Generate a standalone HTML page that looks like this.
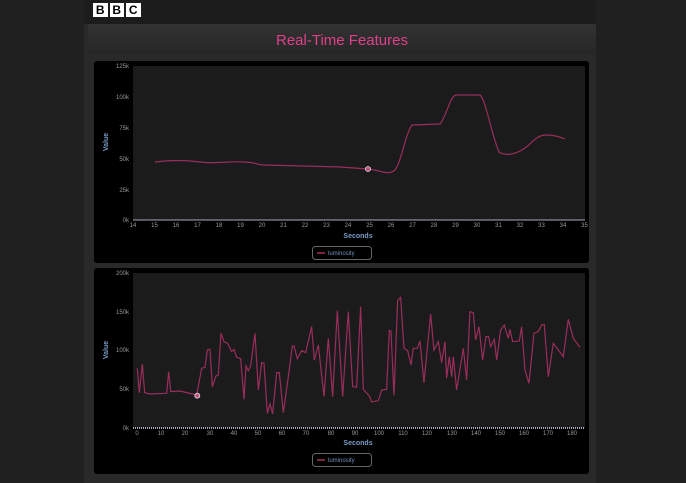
<!DOCTYPE html>
<html><head><meta charset="utf-8"><style>
*{margin:0;padding:0;box-sizing:border-box}
body{width:686px;height:483px;background:#202020;font-family:"Liberation Sans",sans-serif;overflow:hidden;position:relative}
.col{position:absolute;left:84px;top:0;width:512px;height:483px;background:#292929}
.hdr{position:absolute;left:84px;top:0;width:512px;height:24px;background:#1c1c1c}
.bbc{position:absolute;top:3px;display:flex;gap:2px;left:93px}
.bbc span{width:14.5px;height:14px;background:#fff;color:#000;font:bold 12px "Liberation Sans",sans-serif;display:flex;align-items:center;justify-content:center}
.title{position:absolute;left:88px;top:24px;width:508px;height:30px;background:linear-gradient(#333,#262626);color:#e0408a;font-size:15px;text-align:center;line-height:33px}
.panel{position:absolute;left:94px;width:495px;background:#000;border-radius:3px}
svg{position:absolute;left:0;top:0}
</style></head><body>
<div class="col"></div><div class="hdr"></div>
<div class="bbc"><span>B</span><span>B</span><span>C</span></div>
<div class="title">Real-Time Features</div>
<div class="panel" style="top:61px;height:202px"></div>
<div class="panel" style="top:268px;height:206px"></div>
<svg width="686" height="483" font-family="Liberation Sans" font-size="6" fill="#999">
<rect x="133" y="66" width="452" height="154" fill="#1b1b1b"/>
<rect x="133" y="273" width="452" height="155" fill="#1b1b1b"/>
<g text-anchor="end"><text x="129" y="68">125k</text><text x="129" y="99">100k</text><text x="129" y="130">75k</text><text x="129" y="161">50k</text><text x="129" y="192">25k</text><text x="129" y="222">0k</text>
<text x="129" y="275">200k</text><text x="129" y="314">150k</text><text x="129" y="352">100k</text><text x="129" y="391">50k</text><text x="129" y="430">0k</text></g>
<line x1="133" y1="220" x2="585" y2="220" stroke="#aab" stroke-width="1"/>
<line x1="133" y1="428" x2="585" y2="428" stroke="#aab" stroke-width="2" stroke-dasharray="1 1"/>
<g text-anchor="middle">
<text x="133" y="227">14</text><text x="154.5" y="227">15</text><text x="176" y="227">16</text><text x="197.5" y="227">17</text><text x="219" y="227">18</text><text x="240.5" y="227">19</text><text x="262" y="227">20</text><text x="283.5" y="227">21</text><text x="305" y="227">22</text><text x="326.5" y="227">23</text><text x="348" y="227">24</text><text x="369.5" y="227">25</text><text x="391" y="227">26</text><text x="412.5" y="227">27</text><text x="434" y="227">28</text><text x="455.5" y="227">29</text><text x="477" y="227">30</text><text x="498.5" y="227">31</text><text x="520" y="227">32</text><text x="541.5" y="227">33</text><text x="563" y="227">34</text><text x="584.5" y="227">35</text>
<text x="137" y="435">0</text><text x="161" y="435">10</text><text x="185" y="435">20</text><text x="210" y="435">30</text><text x="234" y="435">40</text><text x="258" y="435">50</text><text x="282" y="435">60</text><text x="306" y="435">70</text><text x="331" y="435">80</text><text x="355" y="435">90</text><text x="379" y="435">100</text><text x="403" y="435">110</text><text x="427" y="435">120</text><text x="452" y="435">130</text><text x="476" y="435">140</text><text x="500" y="435">150</text><text x="524" y="435">160</text><text x="548" y="435">170</text><text x="572" y="435">180</text>
<text x="358" y="238" fill="#7a9cc8" font-weight="bold" font-size="7">Seconds</text>
<text x="358" y="445" fill="#7a9cc8" font-weight="bold" font-size="7">Seconds</text>
<text transform="translate(108,142) rotate(-90)" fill="#7a9cc8" font-weight="bold" font-size="7">Value</text>
<text transform="translate(108,350) rotate(-90)" fill="#7a9cc8" font-weight="bold" font-size="7">Value</text>
</g>
<rect x="312.5" y="246.5" width="59" height="13" rx="3" fill="#000" stroke="#666"/>
<rect x="312.5" y="453.5" width="59" height="13" rx="3" fill="#000" stroke="#666"/>
<line x1="317" y1="253" x2="325" y2="253" stroke="#a03060" stroke-width="1.5"/>
<line x1="317" y1="460" x2="325" y2="460" stroke="#a03060" stroke-width="1.5"/>
<text x="328" y="255" fill="#6f8fbf">luminosity</text><text x="328" y="462" fill="#6f8fbf">luminosity</text>
<path d="M155,162 C170,160 185,160 200,162 S230,161 245,162 S255,165 265,165 L340,167 L368,169 C380,170 388,176 395,170 C402,160 405,135 412,125 L440,124 C447,115 450,96 456,95 L480,95 C486,100 490,130 499,152 C505,156 515,155 525,148 C533,142 536,136 545,135 C555,135 560,137 565,139" fill="none" stroke="#9a2d5c" stroke-width="1.2"/>
<circle cx="368" cy="169" r="2.5" fill="#c05080" stroke="#ddd" stroke-width="0.8"/>
<polyline transform="translate(130,280) scale(0.3333)" vector-effect="non-scaling-stroke" fill="none" stroke="#9a2d5c" stroke-width="1.2" points="22,265 28,338 37,252 44,338 60,342 110,340 116,275 122,335 150,333 200,345 215,265 225,262 232,210 240,208 247,320 258,288 265,285 273,160 282,185 293,190 305,215 312,208 320,232 332,236 342,358 348,258 355,272 362,258 375,160 385,330 395,248 402,250 412,400 420,372 428,402 440,278 448,278 460,398 475,290 487,198 492,198 502,236 515,212 527,218 545,140 553,240 565,195 582,350 595,175 608,350 622,92 638,350 655,95 668,320 680,322 692,80 700,328 718,348 725,366 745,362 755,330 770,328 778,152 783,153 792,346 803,62 812,52 822,205 833,212 843,255 850,205 862,205 870,183 882,308 902,102 912,210 925,185 935,248 945,185 950,295 958,230 965,290 970,230 980,330 1000,205 1010,300 1020,95 1030,98 1037,180 1047,140 1058,240 1068,170 1076,170 1082,200 1093,178 1100,240 1112,150 1123,135 1135,175 1140,148 1148,185 1168,183 1175,140 1185,270 1197,310 1212,160 1225,155 1235,135 1243,133 1255,290 1270,190 1285,210 1300,230 1315,118 1330,175 1350,202"/>
<circle cx="197.3" cy="395.7" r="2.5" fill="#c05080" stroke="#ddd" stroke-width="0.8"/>
</svg>
</body></html>
